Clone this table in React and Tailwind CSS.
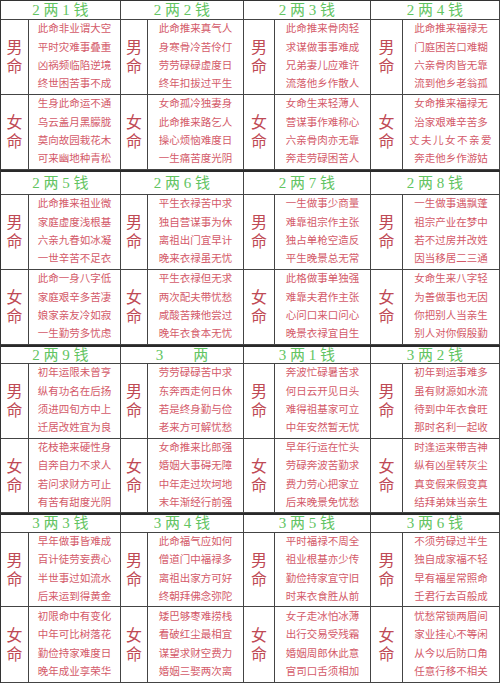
const COLS = 'grid-cols-[28px_92px_27px_96px_31px_96px_32px_97px]'

const groups = [
  {
    wrap: 'border-t border-[#333]',
    rows: 'grid-rows-[19px_75px_75px]',
    items: [
      { title: '2 两 1 钱', male: ['此命非业谓大空', '平时灾难事叠重', '凶祸频临陷逆境', '终世困苦事不成'], female: ['生身此命运不通', '乌云盖月黑朦胧', '莫向故园栽花木', '可来幽地种青松'] },
      { title: '2 两 2 钱', male: ['此命推来真气人', '身寒骨冷苦伶仃', '劳劳碌碌虚度日', '终年扣拔过平生'], female: ['女命孤冷独妻身', '此命推来路乞人', '操心烦恼难度日', '一生痛苦度光阴'] },
      { title: '2 两 3 钱', male: ['此命推来骨肉轻', '求谋做事事难成', '兄弟妻儿应难许', '流落他乡作散人'], female: ['女命生来轻薄人', '营谋事作难称心', '六亲骨肉亦无靠', '奔走劳碌困苦人'] },
      { title: '2 两 4 钱', male: ['此命推来福禄无', '门庭困苦口难糊', '六亲骨肉皆无靠', '流到他乡老翁孤'], female: ['女命推来福禄无', '治家艰难辛苦多', '丈夫儿女不亲爱', '奔走他乡作游姑'] },
    ],
  },
  {
    wrap: 'border-t-2 border-[#2a2a2a]',
    rows: 'grid-rows-[23px_75px_75px]',
    items: [
      { title: '2 两 5 钱', male: ['此命推来祖业微', '家庭虚度浅根基', '六亲九眷如冰凝', '一世辛苦不足衣'], female: ['此命一身八字低', '家庭艰辛多苦凄', '娘家亲友冷如寂', '一生勤劳多忧虑'] },
      { title: '2 两 6 钱', male: ['平生衣禄苦中求', '独自营谋事为休', '离祖出门宜早计', '晚来衣禄虽无忧'], female: ['平生衣禄但无求', '两次配夫带忧愁', '咸酸苦辣他尝过', '晚年衣食本无忧'] },
      { title: '2 两 7 钱', male: ['一生做事少商量', '难靠祖宗作主张', '独占单枪空造反', '平生晚景总无常'], female: ['此格做事单独强', '难靠夫君作主张', '心问口来口问心', '晚景衣禄宜自生'] },
      { title: '2 两 8 钱', male: ['一生做事遇飘蓬', '祖宗产业在梦中', '若不过房并改姓', '因当移居二三通'], female: ['女命生来八字轻', '为善做事也无因', '你把别人当亲生', '别人对你假殷勤'] },
    ],
  },
  {
    wrap: 'border-t-2 border-[#2a2a2a]',
    rows: 'grid-rows-[17px_75px_74px]',
    items: [
      { title: '2 两 9 钱', male: ['初年运限未曾亨', '纵有功名在后扬', '须进四旬方中上', '迁居改姓宜为良'], female: ['花枝艳来硬性身', '自奔自力不求人', '若问求财方可止', '有苦有甜度光阴'] },
      { title: '3\u3000\u3000两', male: ['劳劳碌碌苦中求', '东奔西走何日休', '若是终身勤与俭', '老来方可解忧愁'], female: ['女命推来比郎强', '婚姻大事碍无障', '中年走过坎坷地', '末年渐经行前强'] },
      { title: '3 两 1 钱', male: ['奔波忙碌暑苦求', '何日云开见日头', '难得祖基家可立', '中年安然暂无忧'], female: ['早年行运在忙头', '劳碌奔波苦勤求', '费力劳心把家立', '后来晚景免忧愁'] },
      { title: '3 两 2 钱', male: ['初年到运事难多', '虽有财源如水流', '待到中年衣食旺', '那时名利一起收'], female: ['时逢运来带吉神', '纵有凶星转灰尘', '真变假来假变真', '结拜弟妹当亲生'] },
    ],
  },
  {
    wrap: 'border-t-2 border-[#2a2a2a]',
    rows: 'grid-rows-[18px_74px_76px]',
    items: [
      { title: '3 两 3 钱', male: ['早年做事皆难成', '百计徒劳妄费心', '半世事过如流水', '后来运到得黄金'], female: ['初限命中有变化', '中年可比树落花', '勤俭持家难度日', '晚年成业享荣华'] },
      { title: '3 两 4 钱', male: ['此命福气应如何', '僧道门中福禄多', '离祖出家方可好', '终朝拜佛念弥陀'], female: ['矮巴够枣难捞栈', '看破红尘最相宜', '谋望求财空费力', '婚姻三娶两次离'] },
      { title: '3 两 5 钱', male: ['平时福禄不周全', '祖业根基亦少传', '勤俭持家宜守旧', '时来衣食胜从前'], female: ['女子走冰怕冰薄', '出行交易受残霜', '婚姻周郎休此意', '官司口舌须相加'] },
      { title: '3 两 6 钱', male: ['不须劳碌过半生', '独自成家福不轻', '早有福星常照命', '壬君行去百般成'], female: ['忧愁常锁两眉间', '家业挂心不等闲', '从今以后防口角', '任意行移不相关'] },
    ],
  },
]

function Label({ a }) {
  return (
    <div className="flex flex-col items-center justify-center border-r border-b border-[#444] text-[16px] leading-[19px] text-[#bf4a55]">
      <span>{a}</span>
      <span>命</span>
    </div>
  )
}

function Verse({ lines }) {
  return (
    <div className="flex flex-col items-center justify-center border-r border-b border-[#444] text-[10.5px] leading-[18.4px] text-[#d45a69]">
      {lines.map((l, i) => (
        <span key={i} className={l === '丈夫儿女不亲爱' ? 'tracking-[1.5px]' : ''}>{l}</span>
      ))}
    </div>
  )
}

export default function App() {
  return (
    <div
      className="w-[500px] h-[683px] overflow-hidden bg-white border-l border-[#333]"
      style={{ fontFamily: '"Liberation Serif", "Noto Sans CJK SC", serif' }}
    >
      {groups.map((g, gi) => (
        <div key={gi} className={`grid ${COLS} ${g.rows} ${g.wrap}`}>
          {g.items.map((it, i) => (
            <div key={'h' + i} className="col-span-2 flex items-center justify-center border-r border-b border-[#444] text-[15px] leading-none text-[#62c462] whitespace-pre">
              {it.title}
            </div>
          ))}
          {g.items.map((it, i) => [
            <Label key={'ml' + i} a="男" />,
            <Verse key={'mv' + i} lines={it.male} />,
          ])}
          {g.items.map((it, i) => [
            <Label key={'fl' + i} a="女" />,
            <Verse key={'fv' + i} lines={it.female} />,
          ])}
        </div>
      ))}
    </div>
  )
}
